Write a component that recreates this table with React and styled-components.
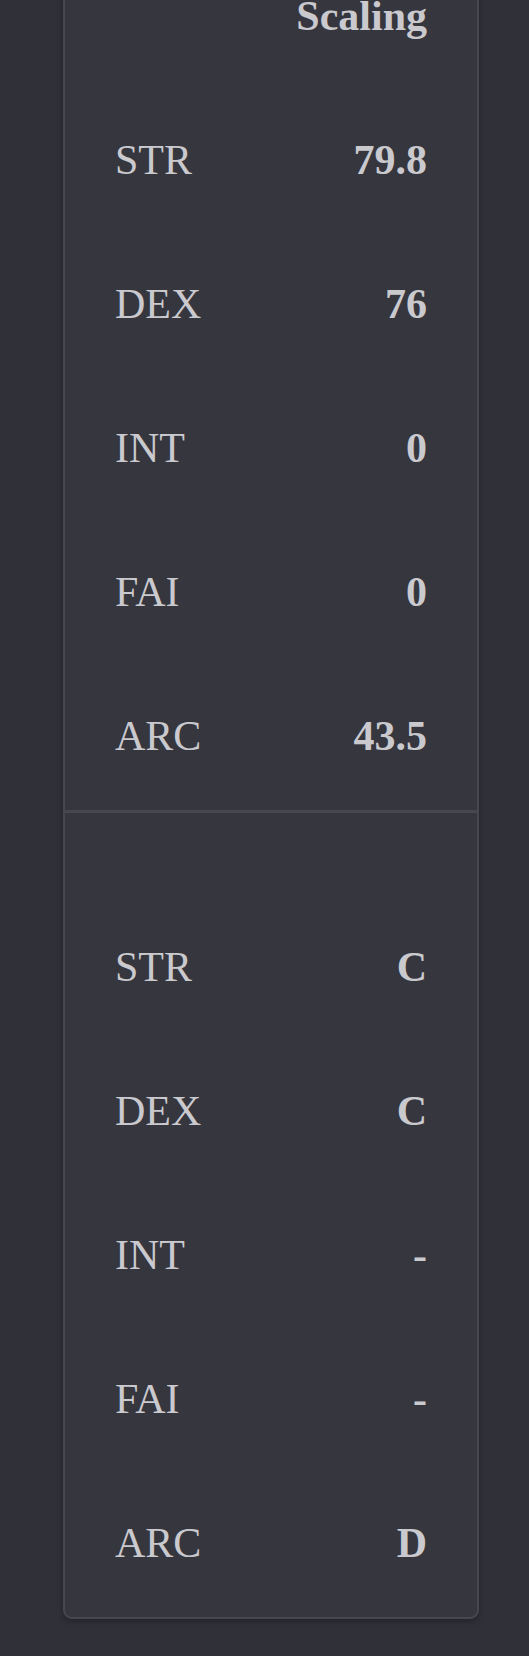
import React from "react";
import styled, { createGlobalStyle } from "styled-components";

const GlobalStyle = createGlobalStyle`
  html, body {
    margin: 0;
    padding: 0;
    background: #303038;
  }
  body {
    font-family: "Liberation Serif", "Times New Roman", serif;
    color: #c9c9ce;
    overflow: hidden;
  }
`;

const attack = [
  ["STR", "79.8"],
  ["DEX", "76"],
  ["INT", "0"],
  ["FAI", "0"],
  ["ARC", "43.5"],
];

const scaling = [
  ["STR", "C"],
  ["DEX", "C"],
  ["INT", "-"],
  ["FAI", "-"],
  ["ARC", "D"],
];

export default function App() {
  return (
    <>
      <GlobalStyle />
      <Page>
        <Card>
          <Section>
            <Row>
              <span />
              <Value>Scaling</Value>
            </Row>
            {attack.map(([k, v]) => (
              <Row key={k}>
                <Label>{k}</Label>
                <Value>{v}</Value>
              </Row>
            ))}
          </Section>
          <Section $gap>
            {scaling.map(([k, v]) => (
              <Row key={k}>
                <Label>{k}</Label>
                <Value>{v}</Value>
              </Row>
            ))}
          </Section>
        </Card>
      </Page>
    </>
  );
}

const Page = styled.div`
  min-height: 1656px;
  padding-left: 63px;
  display: flex;
  flex-direction: column;
  align-items: flex-start;
`;

const Card = styled.div`
  width: 416px;
  box-sizing: border-box;
  margin-top: -56px;
  background: #36363e;
  border: 2px solid #47474f;
  border-radius: 9px;
  box-shadow: 0 3px 6px rgba(0, 0, 0, 0.25);
  display: flex;
  flex-direction: column;
`;

const Section = styled.div`
  display: flex;
  flex-direction: column;
  padding-top: ${(p) => (p.$gap ? "84px" : "0")};
  & + & {
    border-top: 3px solid #47474f;
  }
`;

const Row = styled.div`
  height: 144px;
  box-sizing: border-box;
  padding: 0 50px 4px;
  display: flex;
  align-items: center;
  justify-content: space-between;
  font-size: 42px;
`;

const Label = styled.span`
  font-weight: 400;
`;

const Value = styled.span`
  font-weight: 700;
`;
